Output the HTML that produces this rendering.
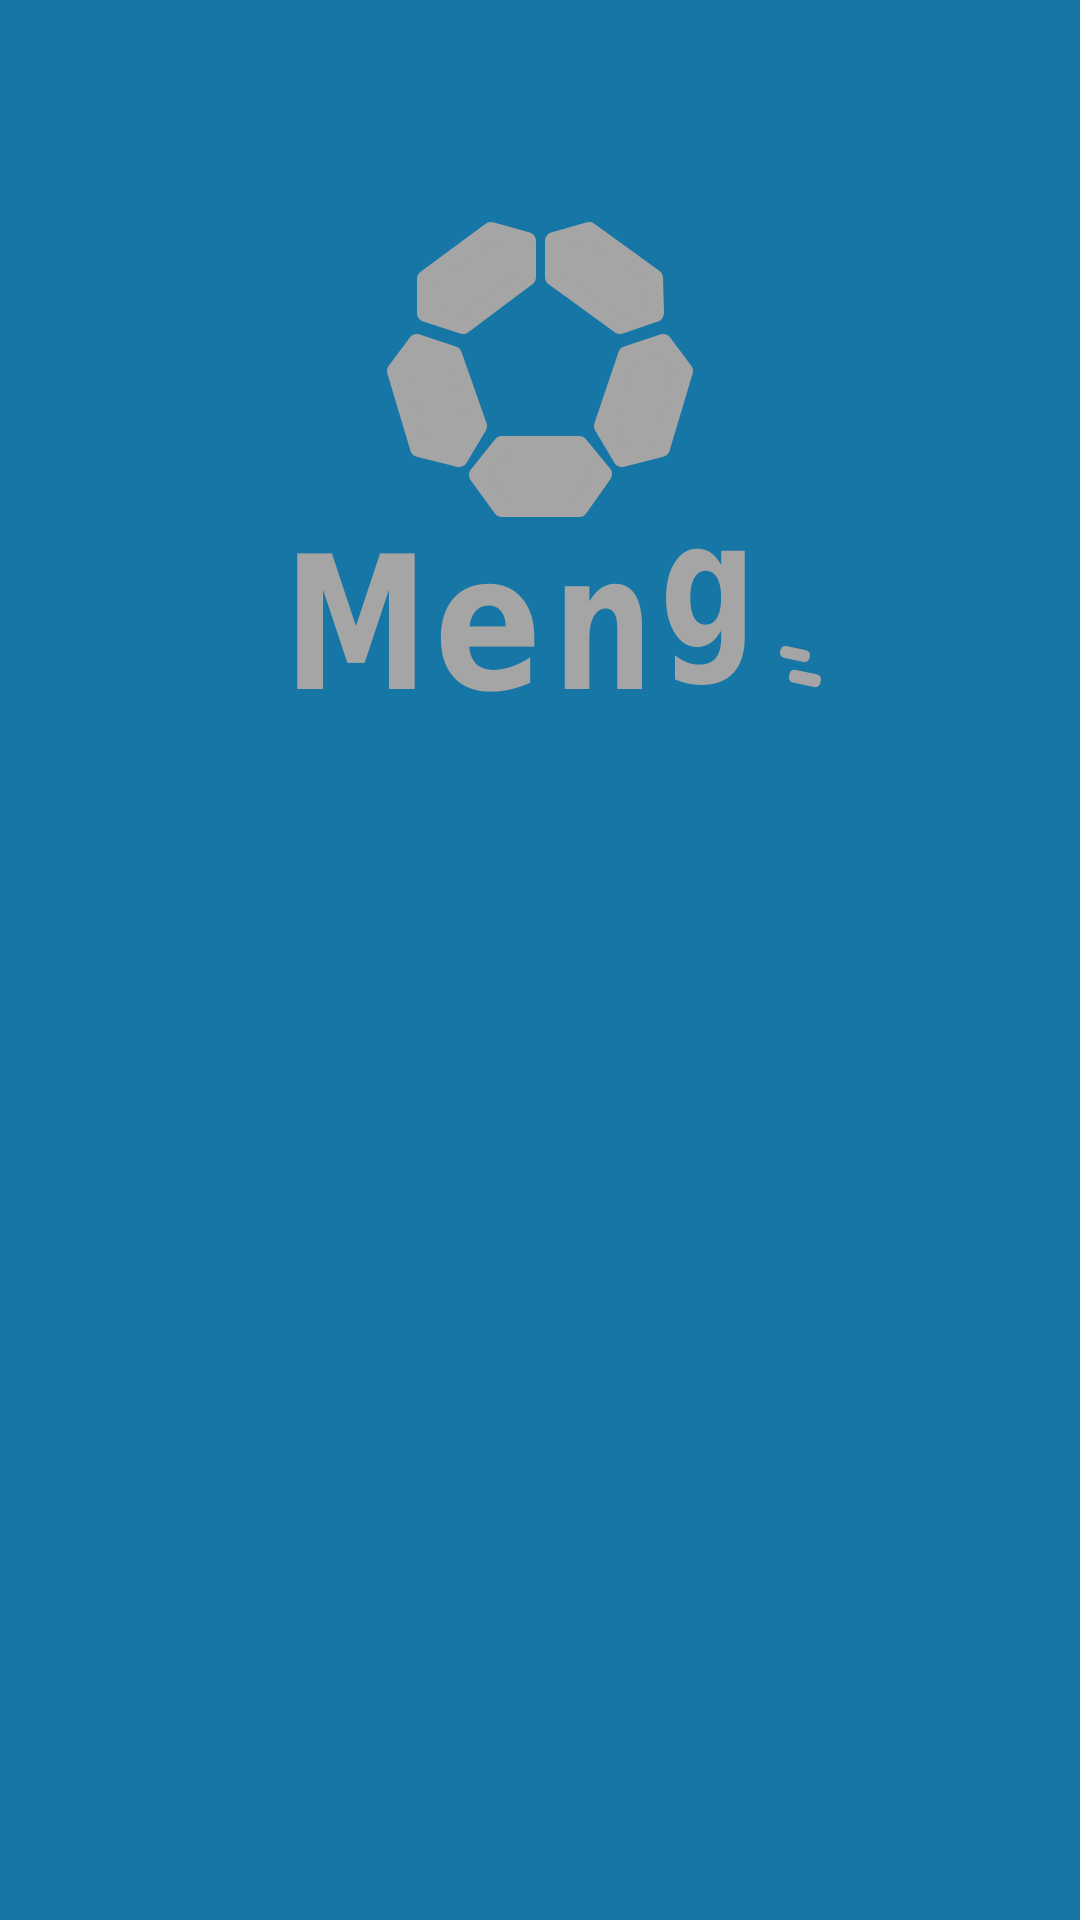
<!DOCTYPE html>
<html><head><meta charset="utf-8"><style>
html,body{margin:0;padding:0;width:1080px;height:1920px;background:#1676a6;overflow:hidden}
svg{display:block}
</style></head><body>
<svg width="1080" height="1920" viewBox="0 0 1080 1920" xmlns="http://www.w3.org/2000/svg">
<rect width="1080" height="1920" fill="#1676a6"/>
<g fill="#a5a5a5" stroke="#a5a5a5" stroke-width="18" stroke-linejoin="round">
<polygon points="426,279 491,231 527,241 527,277 463,325 426,313"/>
<polygon points="554,241 589,231 654,278 655,313 620,325 554,277"/>
<polygon points="396,371 417,343 453,355 478,426 459,458 419,448"/>
<polygon points="684,371 663,343 627,355 603,426 622,458 661,448"/>
<polygon points="478,475 502,445 579,445 603,474 579,508 502,508"/>
<rect x="780" y="648" width="30" height="12" rx="5" transform="rotate(12 795 654)" stroke="none"/>
<rect x="789" y="672" width="32" height="13" rx="5" transform="rotate(12 805 678)" stroke="none"/>
</g>
<g fill="#a5a5a5" font-family="DejaVu Sans, Liberation Sans, sans-serif" font-weight="bold">
<text x="284" y="689" font-size="186" textLength="144" lengthAdjust="spacingAndGlyphs">M</text>
<text x="434" y="689" font-size="188" textLength="108" lengthAdjust="spacingAndGlyphs">e</text>
<text x="553" y="689" font-size="188" textLength="100" lengthAdjust="spacingAndGlyphs">n</text>
<text x="660" y="647" font-size="176" textLength="96" lengthAdjust="spacingAndGlyphs">g</text>
</g>
</svg>
</body></html>
